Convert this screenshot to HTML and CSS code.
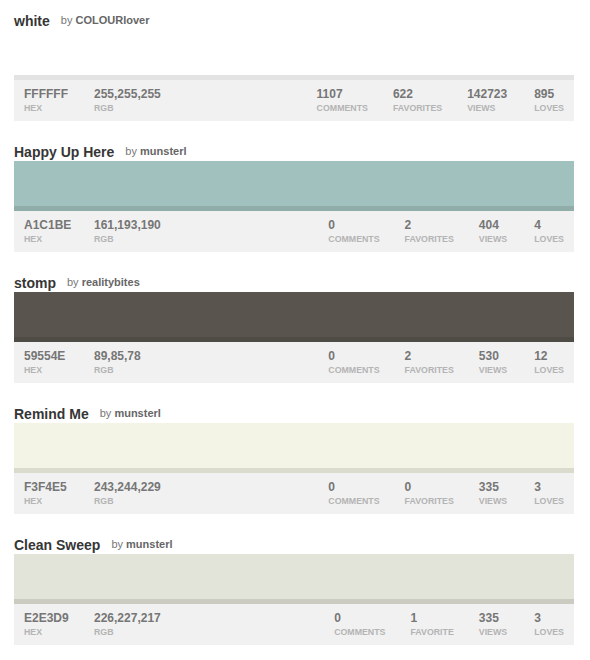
FILE: index.html
```html
<!DOCTYPE html>
<html>
<head>
<meta charset="utf-8">
<title>Colors</title>
<link rel="stylesheet" href="styles.css">
</head>
<body>
<div class="list">
  <div class="color">
    <div class="head"><span class="name">white</span><span class="by">by <b>COLOURlover</b></span></div>
    <div class="swatch" style="background:#FFFFFF"></div>
    <div class="stats">
      <div class="stat hex"><div class="val">FFFFFF</div><div class="lbl">HEX</div></div>
      <div class="stat rgb"><div class="val">255,255,255</div><div class="lbl">RGB</div></div>
      <div class="counts">
        <div class="stat"><div class="val">1107</div><div class="lbl">Comments</div></div>
        <div class="stat"><div class="val">622</div><div class="lbl">Favorites</div></div>
        <div class="stat"><div class="val">142723</div><div class="lbl">Views</div></div>
        <div class="stat loves"><div class="val">895</div><div class="lbl">Loves</div></div>
      </div>
    </div>
  </div>

  <div class="color">
    <div class="head"><span class="name">Happy Up Here</span><span class="by">by <b>munsterl</b></span></div>
    <div class="swatch" style="background:#A1C1BE"></div>
    <div class="stats">
      <div class="stat hex"><div class="val">A1C1BE</div><div class="lbl">HEX</div></div>
      <div class="stat rgb"><div class="val">161,193,190</div><div class="lbl">RGB</div></div>
      <div class="counts">
        <div class="stat"><div class="val">0</div><div class="lbl">Comments</div></div>
        <div class="stat"><div class="val">2</div><div class="lbl">Favorites</div></div>
        <div class="stat"><div class="val">404</div><div class="lbl">Views</div></div>
        <div class="stat loves"><div class="val">4</div><div class="lbl">Loves</div></div>
      </div>
    </div>
  </div>

  <div class="color">
    <div class="head"><span class="name">stomp</span><span class="by">by <b>realitybites</b></span></div>
    <div class="swatch" style="background:#59554E"></div>
    <div class="stats">
      <div class="stat hex"><div class="val">59554E</div><div class="lbl">HEX</div></div>
      <div class="stat rgb"><div class="val">89,85,78</div><div class="lbl">RGB</div></div>
      <div class="counts">
        <div class="stat"><div class="val">0</div><div class="lbl">Comments</div></div>
        <div class="stat"><div class="val">2</div><div class="lbl">Favorites</div></div>
        <div class="stat"><div class="val">530</div><div class="lbl">Views</div></div>
        <div class="stat loves"><div class="val">12</div><div class="lbl">Loves</div></div>
      </div>
    </div>
  </div>

  <div class="color">
    <div class="head"><span class="name">Remind Me</span><span class="by">by <b>munsterl</b></span></div>
    <div class="swatch" style="background:#F3F4E5"></div>
    <div class="stats">
      <div class="stat hex"><div class="val">F3F4E5</div><div class="lbl">HEX</div></div>
      <div class="stat rgb"><div class="val">243,244,229</div><div class="lbl">RGB</div></div>
      <div class="counts">
        <div class="stat"><div class="val">0</div><div class="lbl">Comments</div></div>
        <div class="stat"><div class="val">0</div><div class="lbl">Favorites</div></div>
        <div class="stat"><div class="val">335</div><div class="lbl">Views</div></div>
        <div class="stat loves"><div class="val">3</div><div class="lbl">Loves</div></div>
      </div>
    </div>
  </div>

  <div class="color">
    <div class="head"><span class="name">Clean Sweep</span><span class="by">by <b>munsterl</b></span></div>
    <div class="swatch" style="background:#E2E3D9"></div>
    <div class="stats">
      <div class="stat hex"><div class="val">E2E3D9</div><div class="lbl">HEX</div></div>
      <div class="stat rgb"><div class="val">226,227,217</div><div class="lbl">RGB</div></div>
      <div class="counts">
        <div class="stat"><div class="val">0</div><div class="lbl">Comments</div></div>
        <div class="stat"><div class="val">1</div><div class="lbl">Favorite</div></div>
        <div class="stat"><div class="val">335</div><div class="lbl">Views</div></div>
        <div class="stat loves"><div class="val">3</div><div class="lbl">Loves</div></div>
      </div>
    </div>
  </div>
</div>
</body>
</html>
```
FILE: styles.css
```css
html, body {
  margin: 0;
  padding: 0;
  background: #ffffff;
}
body {
  font-family: "Liberation Sans", Arial, Helvetica, sans-serif;
}
.list {
  width: 560px;
  margin-left: 14px;
  padding-top: 13px;
}
.color {
  margin-bottom: 23px;
}
.head {
  height: 16px;
  line-height: 15px;
  margin-bottom: 1px;
  white-space: nowrap;
}
.name {
  font-size: 14px;
  font-weight: bold;
  color: #363636;
}
.by {
  font-size: 11px;
  color: #777777;
  margin-left: 11px;
  vertical-align: 2px;
}
.by b {
  color: #666666;
}
.swatch {
  height: 45px;
  border-bottom: 5px solid rgba(0, 0, 0, 0.1);
}
.color:first-child .swatch {
  border-bottom-color: #e3e3e3;
}
.stats {
  display: flex;
  align-items: flex-start;
  background: #f1f1f1;
  height: 41px;
  box-sizing: border-box;
  padding: 7px 10px 0 10px;
}
.stat .val {
  font-size: 12px;
  line-height: 14px;
  font-weight: bold;
  color: #767676;
}
.stat .lbl {
  margin-top: 2px;
  font-size: 8.8px;
  line-height: 10px;
  font-weight: bold;
  color: #b4b4b4;
  text-transform: uppercase;
}
.hex {
  width: 70px;
}
.counts {
  margin-left: auto;
  display: flex;
  gap: 25px;
}
.counts .loves {
  margin-left: 2px;
}
```
